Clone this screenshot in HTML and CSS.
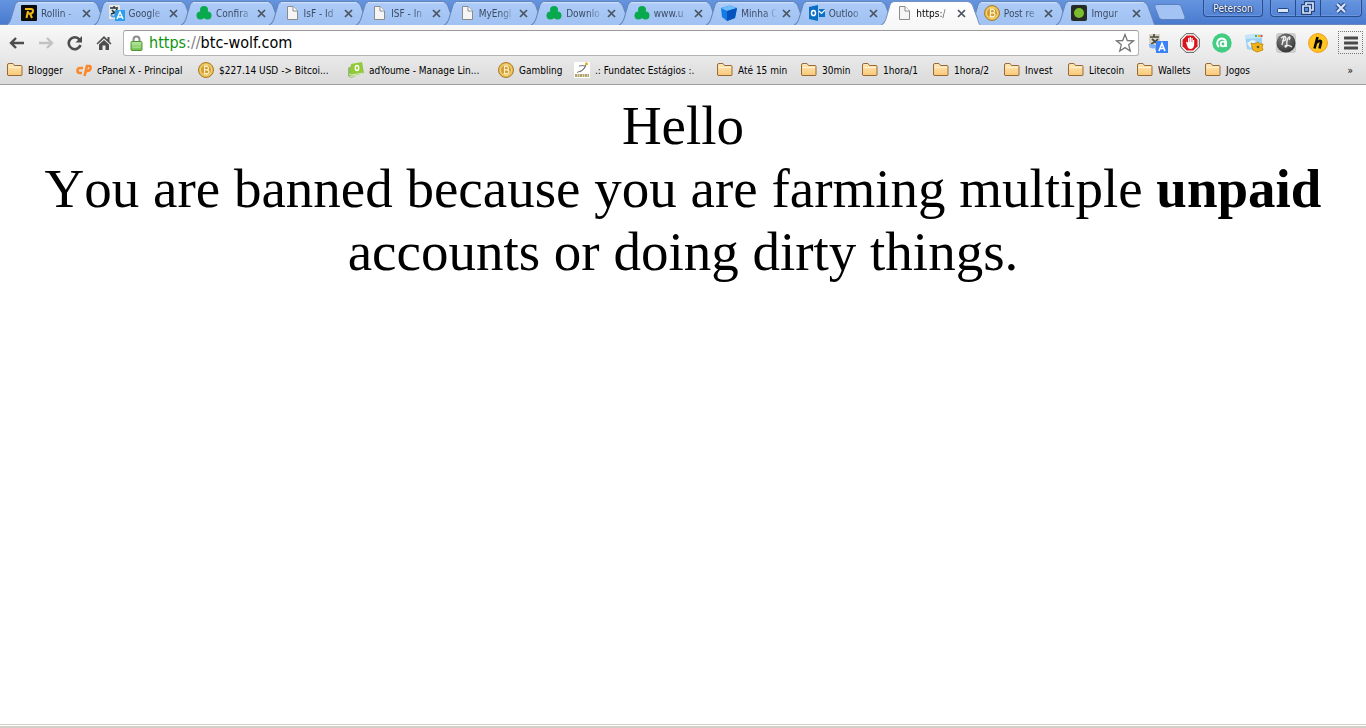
FILE: index.html
```html
<!DOCTYPE html>
<html lang="en">
<head>
    <meta charset="UTF-8">
    <meta name="viewport" content="width=device-width, initial-scale=1.0">
    <title>https://btc-wolf.com</title>
    <link rel="stylesheet" href="styles.css">
</head>
<body>
    <!-- Shared icons -->
    <svg class="sprite" aria-hidden="true">
        <defs>
            <linearGradient id="tabFill" x1="0" y1="0" x2="0" y2="1">
                <stop offset="0" stop-color="#adcbf8"/>
                <stop offset="1" stop-color="#a0c2f2"/>
            </linearGradient>
            <linearGradient id="tabActive" x1="0" y1="0" x2="0" y2="1">
                <stop offset="0" stop-color="#ffffff"/>
                <stop offset="1" stop-color="#f7f7f7"/>
            </linearGradient>
            <linearGradient id="folderFill" x1="0" y1="0" x2="0" y2="1">
                <stop offset="0" stop-color="#ffe9b8"/>
                <stop offset="1" stop-color="#f8c877"/>
            </linearGradient>
            <linearGradient id="lockFill" x1="0" y1="0" x2="0" y2="1">
                <stop offset="0" stop-color="#b9e89b"/>
                <stop offset="1" stop-color="#71bd4e"/>
            </linearGradient>
            <radialGradient id="ball" cx=".4" cy=".3" r=".7">
                <stop offset="0" stop-color="#858585"/>
                <stop offset="1" stop-color="#353535"/>
            </radialGradient>
        </defs>
        <symbol id="tab" viewBox="0 0 100 24" preserveAspectRatio="none">
            <path d="M0 24C3 23 4 21 5 18L9 5Q10 1.500 14 1.500H86Q90 1.500 92 5L97 18Q98 23 100 24Z" fill="url(#tabFill)"/>
            <path d="M0 24C3 23 4 21 5 18L9 5Q10 1.500 14 1.500H86Q90 1.500 92 5L97 18Q98 23 100 24" fill="none" stroke="#6585b8"/>
            <path d="M12 2.500H88" stroke="#c9defb"/>
        </symbol>
        <symbol id="tab-active" viewBox="0 0 100 24" preserveAspectRatio="none">
            <path d="M0 24C3 23 4 21 5 18L9 5Q10 1.500 14 1.500H86Q90 1.500 92 5L97 18Q98 23 100 24Z" fill="url(#tabActive)"/>
            <path d="M0 24C3 23 4 21 5 18L9 5Q10 1.500 14 1.500H86Q90 1.500 92 5L97 18Q98 23 100 24" fill="none" stroke="#7592c0"/>
        </symbol>
        <symbol id="close" viewBox="0 0 9 9">
            <path d="M1 1L8 8M8 1L1 8" stroke="#4a5360" stroke-width="1.700"/>
        </symbol>
        <symbol id="rollin" viewBox="0 0 16 16">
            <rect width="16" height="16" rx="1" fill="#0a0a0a"/>
            <path d="M4 4H10Q12 4 12 6T10 8.500H7M7 6L5.500 13M9 8.500L11 13" fill="none" stroke="#f2b91c" stroke-width="2"/>
        </symbol>
        <symbol id="translate" viewBox="0 0 16 16">
            <rect width="11" height="14" fill="#ebe7dc"/>
            <path d="M1 3H9M5 1V3M8 4Q7 8 2 9M3 5Q5 8 8 9" stroke="#23303d" stroke-width="1.400" fill="none"/>
            <path d="M1 9Q2 14 6 12V15L9 11L5 9V11Z" fill="#479bef"/>
            <rect x="6" y="5" width="10" height="11" fill="#2c9dea"/>
            <path d="M8 14L11 7L14 14M9 12H13" stroke="#fff" stroke-width="1.400" fill="none"/>
        </symbol>
        <symbol id="clover" viewBox="0 0 16 16">
            <circle cx="8" cy="5" r="4" fill="#09a94e"/>
            <circle cx="4.500" cy="10.500" r="4" fill="#09a94e"/>
            <circle cx="11.500" cy="10.500" r="4" fill="#09a94e"/>
            <rect x="6" y="6" width="4" height="7" fill="#09a94e"/>
        </symbol>
        <symbol id="page" viewBox="0 0 16 16">
            <path d="M3.500 1.500H9L13.500 6V14.500H3.500Z" fill="#f5f5f5" stroke="#8b8b8b"/>
            <path d="M9 1.500V6H13.500" fill="#fff" stroke="#8b8b8b"/>
        </symbol>
        <symbol id="cube" viewBox="0 0 16 16">
            <path d="M0 3L9 .5L16 3L14 13L6 16L1 12Z" fill="#147be6"/>
            <path d="M0 3L9 .5L16 3L6 6Z" fill="#6fbcff"/>
            <path d="M6 6L16 3L14 13L6 16Z" fill="#0753bd"/>
        </symbol>
        <symbol id="outlook" viewBox="0 0 16 16">
            <path d="M0 2L9 0V16L0 14Z" fill="#0a6fc5"/>
            <ellipse cx="4.500" cy="8" rx="2" ry="2.600" fill="none" stroke="#fff" stroke-width="1.500"/>
            <path d="M10 4H16V12H10Z" fill="#0a6fc5"/>
            <path d="M10 6L12.500 8.500L16 5" fill="none" stroke="#fff" stroke-width="1.200"/>
        </symbol>
        <symbol id="bitcoin" viewBox="0 0 16 16">
            <circle cx="8" cy="8" r="7.500" fill="#e9bd4e" stroke="#a97b2b"/>
            <circle cx="8" cy="8" r="5.500" fill="#d09b35" stroke="#f6d77d"/>
            <path d="M6 4.500H8.500Q10.500 4.500 10.500 6.200Q10.500 7.800 8.500 7.800H6.500H9Q11 8 11 9.700Q11 11.500 9 11.500H5.500M6.500 4.500V11.500M7 3V4.500M9 3V4.500M7 11.500V13M9 11.500V13" fill="none" stroke="#fff1bf" stroke-width="1.200"/>
        </symbol>
        <symbol id="imgur" viewBox="0 0 16 16">
            <rect width="16" height="16" rx="2" fill="#262b25"/>
            <circle cx="8" cy="8" r="5" fill="#7cbd2f"/>
        </symbol>
        <symbol id="folder" viewBox="0 0 16 16">
            <path d="M.5 13V3Q.5 1.500 2 1.500H6L7.500 3.500H14Q15 3.500 15 4.500V13Q15 13.500 14 13.500H1Z" fill="url(#folderFill)" stroke="#98683b"/>
            <path d="M1.500 5.500H14" stroke="#fff2d3"/>
        </symbol>
        <symbol id="money" viewBox="0 0 16 16">
            <path d="M0 6L3 4L14 1L16 11L3 16L0 14Z" fill="#8fbf5a"/>
            <path d="M3 2L14 0L15 10L3 12Z" fill="#92cb36"/>
            <ellipse cx="9" cy="6" rx="1.700" ry="2.500" fill="none" stroke="#fff" stroke-width="1.400"/>
            <path d="M1 12L3 13L15 11M2 14.500L14 12.500" fill="none" stroke="#dcecc4"/>
        </symbol>
        <symbol id="cpanel" viewBox="0 0 16 16">
            <path d="M7 6H4Q1.500 6 1.500 8.500T4 11H6M8.500 14L11 4H13Q15 4 14.500 6.500Q14 9 11 9H9.500" fill="none" stroke="#fa882b" stroke-width="2.600"/>
        </symbol>
        <symbol id="fundatec" viewBox="0 0 16 16">
            <rect width="16" height="16" fill="#fff"/>
            <path d="M5 4Q12 3 11 5Q9 9 3 10.500M12 2Q12 7 6 10" fill="none" stroke="#777"/>
            <circle cx="12.500" cy="1.800" r="1.500" fill="#dfb526"/>
            <path d="M1 13.500H15" stroke="#b3a46c" stroke-width="3" stroke-dasharray="2 .5"/>
        </symbol>
    </svg>

    <header class="browser">
        <div class="titlebar">
            <ul class="tabs">
                <li class="tab"><svg class="tab-shape"><use href="#tab"/></svg><svg class="icon"><use href="#rollin"/></svg><a href="#">Rollin - </a><button type="button" aria-label="Close Rollin"><svg><use href="#close"/></svg></button></li>
                <li class="tab"><svg class="tab-shape"><use href="#tab"/></svg><svg class="icon"><use href="#translate"/></svg><a href="#">Google</a><button type="button" aria-label="Close Google"><svg><use href="#close"/></svg></button></li>
                <li class="tab"><svg class="tab-shape"><use href="#tab"/></svg><svg class="icon"><use href="#clover"/></svg><a href="#">Confira</a><button type="button" aria-label="Close Confira"><svg><use href="#close"/></svg></button></li>
                <li class="tab"><svg class="tab-shape"><use href="#tab"/></svg><svg class="icon"><use href="#page"/></svg><a href="#">IsF - Id</a><button type="button" aria-label="Close IsF"><svg><use href="#close"/></svg></button></li>
                <li class="tab"><svg class="tab-shape"><use href="#tab"/></svg><svg class="icon"><use href="#page"/></svg><a href="#">ISF - In</a><button type="button" aria-label="Close ISF"><svg><use href="#close"/></svg></button></li>
                <li class="tab"><svg class="tab-shape"><use href="#tab"/></svg><svg class="icon"><use href="#page"/></svg><a href="#">MyEngl</a><button type="button" aria-label="Close MyEngl"><svg><use href="#close"/></svg></button></li>
                <li class="tab"><svg class="tab-shape"><use href="#tab"/></svg><svg class="icon"><use href="#clover"/></svg><a href="#">Downlo</a><button type="button" aria-label="Close Download"><svg><use href="#close"/></svg></button></li>
                <li class="tab"><svg class="tab-shape"><use href="#tab"/></svg><svg class="icon"><use href="#clover"/></svg><a href="#">www.u</a><button type="button" aria-label="Close www"><svg><use href="#close"/></svg></button></li>
                <li class="tab"><svg class="tab-shape"><use href="#tab"/></svg><svg class="icon"><use href="#cube"/></svg><a href="#">Minha C</a><button type="button" aria-label="Close Minha"><svg><use href="#close"/></svg></button></li>
                <li class="tab"><svg class="tab-shape"><use href="#tab"/></svg><svg class="icon"><use href="#outlook"/></svg><a href="#">Outloo</a><button type="button" aria-label="Close Outlook"><svg><use href="#close"/></svg></button></li>
                <li class="tab active"><svg class="tab-shape"><use href="#tab-active"/></svg><svg class="icon"><use href="#page"/></svg><a href="#">https:/</a><button type="button" aria-label="Close page"><svg><use href="#close"/></svg></button></li>
                <li class="tab"><svg class="tab-shape"><use href="#tab"/></svg><svg class="icon"><use href="#bitcoin"/></svg><a href="#">Post re</a><button type="button" aria-label="Close Post"><svg><use href="#close"/></svg></button></li>
                <li class="tab"><svg class="tab-shape"><use href="#tab"/></svg><svg class="icon"><use href="#imgur"/></svg><a href="#">Imgur</a><button type="button" aria-label="Close Imgur"><svg><use href="#close"/></svg></button></li>
            </ul>
            <button type="button" class="new-tab" aria-label="New tab">
                <svg width="32" height="16" viewBox="0 0 32 16"><path d="M3 .5H24Q26 .5 27 2L31 13Q31.500 15.500 29 15.500H8Q6 15.500 5 13.500L.8 3Q.3 .5 3 .5Z" fill="#a3c3f4" stroke="#5c80bc"/></svg>
            </button>
            <div class="window-buttons">
                <button type="button" class="profile">Peterson</button>
                <div class="controls">
                    <button type="button" aria-label="Minimize"><svg width="14" height="12" viewBox="0 0 14 12"><rect x="1.500" y="6.500" width="11" height="4" rx="1" fill="#d8e5fa" stroke="#24457f"/></svg></button>
                    <button type="button" aria-label="Restore"><svg width="14" height="14" viewBox="0 0 14 14"><path d="M5 5V2H12V9H9" fill="none" stroke="#24457f" stroke-width="4"/><path d="M2 5H9V12H2Z" fill="none" stroke="#24457f" stroke-width="4"/><path d="M5 4V2H12V9H10M2 5H9V12H2Z" fill="none" stroke="#d8e5fa" stroke-width="1.700"/></svg></button>
                    <button type="button" class="close-window" aria-label="Close window"><svg width="14" height="12" viewBox="0 0 14 12"><path d="M3 2L11 10M11 2L3 10" stroke="#24457f" stroke-width="4.500"/><path d="M3 2L11 10M11 2L3 10" stroke="#d8e5fa" stroke-width="2.400"/></svg></button>
                </div>
            </div>
        </div>

        <div class="toolbar">
            <div class="nav">
                <button type="button" aria-label="Back"><svg viewBox="0 0 16 16"><path d="M1.500 8H15M7 3L2 8L7 13" fill="none" stroke="#4d4d4d" stroke-width="2.400"/></svg></button>
                <button type="button" aria-label="Forward"><svg viewBox="0 0 16 16"><path d="M1 8H14.500M9 3L14 8L9 13" fill="none" stroke="#c2c2c2" stroke-width="2.400"/></svg></button>
                <button type="button" aria-label="Reload"><svg viewBox="0 0 16 16"><path d="M12.500 4.500A6 6 0 1 0 13.500 10" fill="none" stroke="#4d4d4d" stroke-width="2.600"/><path d="M15 1V7.500H8.500Z" fill="#4d4d4d"/></svg></button>
                <button type="button" aria-label="Home"><svg viewBox="0 0 16 16"><path d="M8 1L.5 8.500L1.500 9.500L8 3.500L14.500 9.500L15.500 8.500L13.500 6.500V2H11.500V4.500Z" fill="#4d4d4d"/><path d="M3 9.500L8 5L13 9.500V15H9.500V10.500H6.500V15H3Z" fill="#4d4d4d"/></svg></button>
            </div>
            <div class="omnibox">
                <svg class="lock" viewBox="0 0 12 16"><path d="M3 8V4.500Q3 1.500 6 1.500T9 4.500V8" fill="none" stroke="#8c8c8c" stroke-width="2"/><rect x=".5" y="6.500" width="11" height="9" rx="1" fill="url(#lockFill)" stroke="#4c9435"/><path d="M2 9.500H10M2 12.500H10" stroke="#a5dc88"/></svg>
                <label for="url"><span class="scheme">https</span><span class="slashes">://</span></label>
                <input type="text" id="url" value="btc-wolf.com" spellcheck="false">
                <button type="button" aria-label="Bookmark this page"><svg width="20" height="20" viewBox="0 0 20 20"><path d="M10 1.500L12.300 7.500L18.500 7.800L13.700 11.800L15.300 18L10 14.600L4.700 18L6.300 11.800L1.500 7.800L7.700 7.500Z" fill="#fff" stroke="#777" stroke-width="1.300"/></svg></button>
            </div>
            <div class="extensions">
                <button type="button" aria-label="Translate"><svg viewBox="0 0 20 20"><rect x="1" y="1" width="11" height="14" fill="#d9d3c5"/><path d="M2 4H11M6 1V4M10 6Q8 9 3 11M4 6L10 11" stroke="#4a4a42" stroke-width="1.700" fill="none"/><path d="M1 11Q2 17 7 15V18L10 13L5 11Z" fill="#7db0fa"/><rect x="8" y="8" width="12" height="12" fill="#3b82f5"/><path d="M11 18L14 10.500L17 18M12 15.500H16" stroke="#fff" stroke-width="1.600" fill="none"/></svg></button>
                <button type="button" aria-label="AdBlock"><svg viewBox="0 0 20 20"><path d="M6 .7H14L19.300 6V14L14 19.300H6L.7 14V6Z" fill="#fff" stroke="#555"/><path d="M6.700 2.500H13.300L17.500 6.700V13.300L13.300 17.500H6.700L2.500 13.300V6.700Z" fill="#d8151c"/><path d="M6 9Q7 8 8 10V5H9.300V9H9.700V4H11V9H11.400V5H12.700V9.500H13V7H14.200V12Q13.500 16 10.500 16Q8 16 7 12.500Z" fill="#fff"/></svg></button>
                <button type="button" aria-label="At"><svg viewBox="0 0 20 20"><circle cx="10" cy="10" r="9.700" fill="#42cd82"/><path d="M7 14Q4 11 6 7.500Q8.500 4.500 12 6Q14.500 7.500 14 11V14" fill="none" stroke="#fff" stroke-width="2"/><circle cx="11" cy="11" r="2.300" fill="none" stroke="#fff" stroke-width="1.800"/></svg></button>
                <button type="button" aria-label="Window tools"><svg viewBox="0 0 20 20"><path d="M1 2L18 1V13L13 18L3 16Z" fill="#9bd0f5"/><path d="M1 2L18 1V5L1 6Z" fill="#c5e5fa"/><path d="M11 3H13" stroke="#48b94c" stroke-width="2"/><path d="M14 3H16" stroke="#efaf28" stroke-width="2"/><path d="M16.500 3H18.500" stroke="#e34a35" stroke-width="2"/><path d="M3 10L8 7L12 8L6 15Z" fill="#e7f5ff"/><path d="M8 13L7 10L11 11L14 9L16 11L19 11L18 14L19 17L16 18L13 19L9 17Z" fill="#f0b51c" stroke="#d18e0c"/><circle cx="14" cy="14" r="1.300" fill="#684c19"/></svg></button>
                <button type="button" aria-label="PL"><svg viewBox="0 0 20 20"><rect width="20" height="20" rx="3" fill="#ccc"/><circle cx="10" cy="10" r="9.500" fill="url(#ball)"/><path d="M5 5Q9 2 10 5Q10 8 6 8M8 4L6 12M13 4Q10 7 11 13Q9 15 9 13Q11 11 16 14M13 4Q15 4 13 7" fill="none" stroke="#eee" stroke-width="1.300"/></svg></button>
                <button type="button" aria-label="h"><svg viewBox="0 0 20 20"><circle cx="10" cy="10" r="9.400" fill="#ffc51f" stroke="#f39a1a"/><path d="M9.500 4L6.500 15.500M8 10Q13 6 13 9L11.500 15.500" fill="none" stroke="#080808" stroke-width="2.600"/></svg></button>
            </div>
            <button type="button" class="menu" aria-label="Menu"><svg width="14" height="14" viewBox="0 0 14 14"><path d="M1 2H13M1 7H13M1 12H13" stroke="#4a4a4a" stroke-width="3" stroke-linecap="round"/></svg></button>
        </div>

        <nav class="bookmarks">
            <a href="#"><svg class="icon"><use href="#folder"/></svg>Blogger</a>
            <a href="#"><svg class="icon"><use href="#cpanel"/></svg>cPanel X - Principal</a>
            <a href="#"><svg class="icon"><use href="#bitcoin"/></svg>$227.14 USD -&gt; Bitcoi...</a>
            <a href="#"><svg class="icon"><use href="#money"/></svg>adYoume - Manage Lin...</a>
            <a href="#"><svg class="icon"><use href="#bitcoin"/></svg>Gambling</a>
            <a href="#"><svg class="icon"><use href="#fundatec"/></svg>.: Fundatec Estágios :.</a>
            <a href="#"><svg class="icon"><use href="#folder"/></svg>Até 15 min</a>
            <a href="#"><svg class="icon"><use href="#folder"/></svg>30min</a>
            <a href="#"><svg class="icon"><use href="#folder"/></svg>1hora/1</a>
            <a href="#"><svg class="icon"><use href="#folder"/></svg>1hora/2</a>
            <a href="#"><svg class="icon"><use href="#folder"/></svg>Invest</a>
            <a href="#"><svg class="icon"><use href="#folder"/></svg>Litecoin</a>
            <a href="#"><svg class="icon"><use href="#folder"/></svg>Wallets</a>
            <a href="#"><svg class="icon"><use href="#folder"/></svg>Jogos</a>
            <button type="button" aria-label="More bookmarks">»</button>
        </nav>
    </header>

    <main class="message">
        <p>Hello</p>
        <p>You are banned because you are farming multiple <b>unpaid</b> accounts or doing dirty things.</p>
    </main>

    <footer class="window-edge"></footer>
</body>
</html>
```
FILE: styles.css
```css
* {
    margin: 0;
    padding: 0;
    box-sizing: border-box;
}

body {
    min-height: 100vh;
    display: flex;
    flex-direction: column;
    background: white;
    color: black;
    font-family: "DejaVu Sans Condensed", "Open Sans", sans-serif;
    font-size: 10px;
}

button {
    border: none;
    background: none;
    font: inherit;
    cursor: pointer;
}

a {
    color: inherit;
    text-decoration: none;
}

svg {
    display: block;
}

.sprite {
    position: absolute;
    width: 0;
    height: 0;
}

.icon {
    flex: none;
    width: 16px;
    height: 16px;
}

/* Tab strip */
.titlebar {
    display: flex;
    height: 25px;
    padding-left: 6px;
    background: linear-gradient(#6595df, #4a7acf);
    border-bottom: 1px solid #6888bb;
}

.tabs {
    display: flex;
    flex: 1;
    max-width: 1138px;
    list-style: none;
}

.tab {
    position: relative;
    display: flex;
    flex: 1;
    align-items: center;
    min-width: 0;
    height: 25px;
    padding: 1px 3px 0 15px;
    color: #3b4a63;
}

.tab-shape {
    position: absolute;
    top: 0;
    left: 0;
    width: calc(100% + 12px);
    height: 25px;
}

.tab .icon,
.tab a,
.tab button {
    position: relative;
}

.tab a {
    flex: 1;
    min-width: 0;
    margin-left: 4px;
    overflow: hidden;
    white-space: nowrap;
    mask-image: linear-gradient(to right, black 60%, transparent);
}

.tab button {
    flex: none;
    margin-left: 4px;
}

.tab button svg {
    width: 9px;
    height: 9px;
}

.tab.active {
    z-index: 1;
    color: black;
}

.new-tab {
    align-self: center;
    margin-left: 10px;
}

.window-buttons {
    display: flex;
    gap: 7px;
    height: 17px;
    margin-left: auto;
    padding-right: 4px;
}

.profile,
.controls {
    border: 1px solid #274d91;
    border-top: none;
    border-radius: 0 0 4px 4px;
    box-shadow: inset 0 0 0 1px #6b96dd;
}

.profile {
    width: 60px;
    color: white;
    text-shadow: 0 1px 1px #1b3568, 1px 0 1px #1b3568, -1px 0 1px #1b3568;
}

.controls {
    display: flex;
}

.controls button {
    display: flex;
    align-items: center;
    justify-content: center;
    width: 25px;
    border-right: 1px solid #274d91;
}

.controls .close-window {
    width: 40px;
    border-right: none;
}

/* Toolbar */
.toolbar {
    display: flex;
    align-items: center;
    height: 34px;
    padding: 4px 3px 3px 9px;
    background: linear-gradient(#f8f8f8, #e8e8e8);
}

.nav {
    display: flex;
    gap: 13px;
    margin-right: 11px;
}

.nav svg {
    width: 16px;
    height: 16px;
}

.omnibox {
    display: flex;
    flex: 1;
    align-items: center;
    height: 26px;
    padding: 0 3px 0 6px;
    background: white;
    border: 1px solid #b4b4b4;
    border-top-color: #9c9c9c;
    border-radius: 3px;
    font-size: 16px;
}

.lock {
    width: 13px;
    height: 16px;
    margin-right: 6px;
}

.scheme {
    color: #0b9412;
}

.slashes {
    color: #808080;
}

.omnibox input {
    flex: 1;
    min-width: 0;
    border: none;
    outline: none;
    background: none;
    font: inherit;
}

.extensions {
    display: flex;
    gap: 12px;
    margin: 0 10px 0 9px;
}

.extensions svg {
    width: 20px;
    height: 20px;
}

.menu {
    display: flex;
    align-items: center;
    justify-content: center;
    width: 25px;
    height: 23px;
    border: 1px dotted #777;
}

/* Bookmarks bar */
.bookmarks {
    display: grid;
    grid-template-columns: 69px 122px 150px 150px 76px 143px 84px 61px 71px 71px 64px 69px 68px 1fr auto;
    align-items: center;
    height: 26px;
    padding: 0 13px 3px 7px;
    background: linear-gradient(#e7e7e7, #dbdbdb);
    border-bottom: 1px solid #a0a0a0;
}

.bookmarks a {
    display: flex;
    align-items: center;
    gap: 5px;
    white-space: nowrap;
}

/* Page */
.message {
    flex: 1;
    padding: 9px 8px;
    font-family: "Liberation Serif", "Times New Roman", serif;
    font-size: 55px;
    font-kerning: none;
    line-height: 63px;
    text-align: center;
}

.window-edge {
    height: 4px;
    border-top: 1px solid #d4d0c8;
    border-bottom: 2px solid #d4d0c8;
}
```
